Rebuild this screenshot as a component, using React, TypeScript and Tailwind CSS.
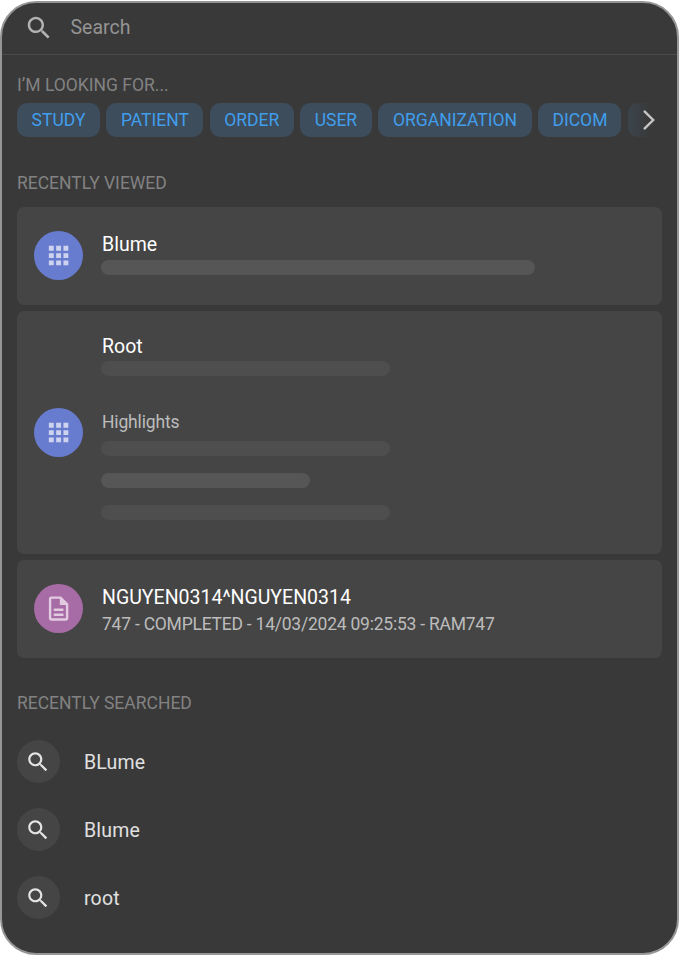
import type { ReactNode } from 'react';

const chips = [
  { label: 'STUDY', width: 'w-[83px]' },
  { label: 'PATIENT', width: 'w-[97px]' },
  { label: 'ORDER', width: 'w-[84px]' },
  { label: 'USER', width: 'w-[71.5px]' },
  { label: 'ORGANIZATION', width: 'w-[154px]' },
  { label: 'DICOM', width: 'w-[83px]' },
];

const searches = ['BLume', 'Blume', 'root'];

function SearchIcon({ className }: { className: string }) {
  return (
    <svg viewBox="0 0 24 24" fill="currentColor" className={className}>
      <path d="M15.5 14h-.79l-.28-.27C15.41 12.59 16 11.11 16 9.5 16 5.91 13.09 3 9.5 3S3 5.91 3 9.5 5.91 16 9.5 16c1.61 0 3.09-.59 4.23-1.57l.27.28v.79l5 4.99L20.49 19l-4.99-5zm-6 0C7.01 14 5 11.99 5 9.5S7.01 5 9.5 5 14 7.01 14 9.5 11.99 14 9.5 14z" />
    </svg>
  );
}

function GridIcon() {
  return (
    <svg viewBox="0 0 24 24" fill="currentColor" className="size-[29.2px] text-[#cdd3ef]">
      <path d="M4 8h4V4H4v4zm6 12h4v-4h-4v4zm-6 0h4v-4H4v4zm0-6h4v-4H4v4zm6 0h4v-4h-4v4zm6-10v4h4V4h-4zm-6 4h4V4h-4v4zm6 6h4v-4h-4v4zm0 6h4v-4h-4v4z" />
    </svg>
  );
}

function DocIcon() {
  return (
    <svg viewBox="0 0 24 24" fill="currentColor" className="size-[29.2px] text-[#e2cae1]">
      <path d="M8 16h8v2H8zm0-4h8v2H8zm6-10H6c-1.1 0-2 .9-2 2v16c0 1.1.89 2 1.99 2H18c1.1 0 2-.9 2-2V8l-6-6zm4 18H6V4h7v5h5v11z" />
    </svg>
  );
}

function Avatar({ color, children }: { color: string; children: ReactNode }) {
  return (
    <div className={`flex size-[49px] shrink-0 items-center justify-center rounded-full ${color}`}>
      {children}
    </div>
  );
}

function Heading({ children, className }: { children: ReactNode; className: string }) {
  return (
    <h2 className={`h-5 text-[17.5px] leading-5 whitespace-nowrap text-[#828282] ${className}`}>
      {children}
    </h2>
  );
}

function Bar({ className }: { className: string }) {
  return <div className={`-ml-px h-[15px] rounded-full ${className}`} />;
}

export default function App() {
  return (
    <main className="h-[956px] w-[679px] bg-white pt-px font-['Roboto','Liberation_Sans',sans-serif]">
      <div className="flex h-[954px] w-[679px] flex-col overflow-hidden rounded-[36px] border-2 border-[#969696] bg-[#393939]">
        <header className="flex h-[52px] shrink-0 items-center border-b border-[#4b4b4b] pb-[2px] pl-[22px]">
          <SearchIcon className="size-[30px] text-[#b2b2b2]" />
          <span className="ml-[16.5px] text-[19.5px] leading-6 text-[#949494]">Search</span>
        </header>

        <section className="pl-[15px]">
          <Heading className="mt-[20px]">I’M LOOKING FOR...</Heading>
          <div className="mt-[8px] flex items-center gap-[6.4px]">
            {chips.map((chip) => (
              <button
                key={chip.label}
                className={`${chip.width} h-[34px] shrink-0 rounded-[10px] bg-[#3d4d5b] pt-px text-center text-[17.5px] text-[#419eec]`}
              >
                {chip.label}
              </button>
            ))}
            <div className="flex h-[34px] w-[36px] items-center justify-center rounded-l-[10px] bg-linear-to-r from-[#3b454d] to-[#393939] to-60%">
              <svg viewBox="0 0 24 24" fill="none" stroke="#c4c4c4" strokeWidth="2.4" className="ml-[7px] size-6 shrink-0">
                <path d="M7 2.8 16.2 12 7 21.2" />
              </svg>
            </div>
          </div>
        </section>

        <section className="px-[15px]">
          <Heading className="mt-[36px]">RECENTLY VIEWED</Heading>
          <div className="mt-[14px] flex w-[644.5px] flex-col gap-[6px]">
            <article className="flex h-[97.5px] items-center rounded-[7px] bg-[#454545] pl-[17px]">
              <Avatar color="bg-[#687ccf]"><GridIcon /></Avatar>
              <div className="ml-[19px] pb-[4px]">
                <div className="text-[19.5px] leading-6 text-white">Blume</div>
                <Bar className="mt-[3.5px] w-[434px] bg-[#565656]" />
              </div>
            </article>
            <article className="flex h-[243.5px] items-center rounded-[7px] bg-[#454545] pl-[17px]">
              <Avatar color="bg-[#687ccf]"><GridIcon /></Avatar>
              <div className="ml-[19px] pb-[9px]">
                <div className="text-[19.5px] leading-6 text-white">Root</div>
                <Bar className="mt-[2px] w-[289px] bg-[#4e4e4e]" />
                <div className="mt-[36px] text-[17.5px] leading-5 tracking-[-0.15px] text-[#bcbcbc]">Highlights</div>
                <Bar className="mt-[9px] w-[289px] bg-[#4e4e4e]" />
                <Bar className="mt-[17px] w-[209px] bg-[#565656]" />
                <Bar className="mt-[17px] w-[289px] bg-[#4e4e4e]" />
              </div>
            </article>
            <article className="flex h-[97.5px] items-center rounded-[7px] bg-[#454545] pl-[17px]">
              <Avatar color="bg-[#a76ba5]"><DocIcon /></Avatar>
              <div className="ml-[19px] pt-[4px] whitespace-nowrap">
                <div className="text-[19.5px] leading-6 text-white">NGUYEN0314^NGUYEN0314</div>
                <div className="mt-[2px] text-[17.5px] leading-6 tracking-[-0.23px] text-[#bcbcbc]">
                  747 - COMPLETED - 14/03/2024 09:25:53 - RAM747
                </div>
              </div>
            </article>
          </div>
        </section>

        <section className="pl-[15px]">
          <Heading className="mt-[35.5px]">RECENTLY SEARCHED</Heading>
          <ul className="mt-[27px] flex flex-col gap-[25.2px]">
            {searches.map((item) => (
              <li key={item} className="flex h-[43px] items-center">
                <div className="flex size-[43px] items-center justify-center rounded-full bg-[#454545] pr-px">
                  <SearchIcon className="size-[26px] text-[#e4e4e4]" />
                </div>
                <span className="ml-[24px] pt-[2px] text-[19.5px] leading-6 tracking-[0.18px] text-[#e0e0e0]">{item}</span>
              </li>
            ))}
          </ul>
        </section>
      </div>
    </main>
  );
}
